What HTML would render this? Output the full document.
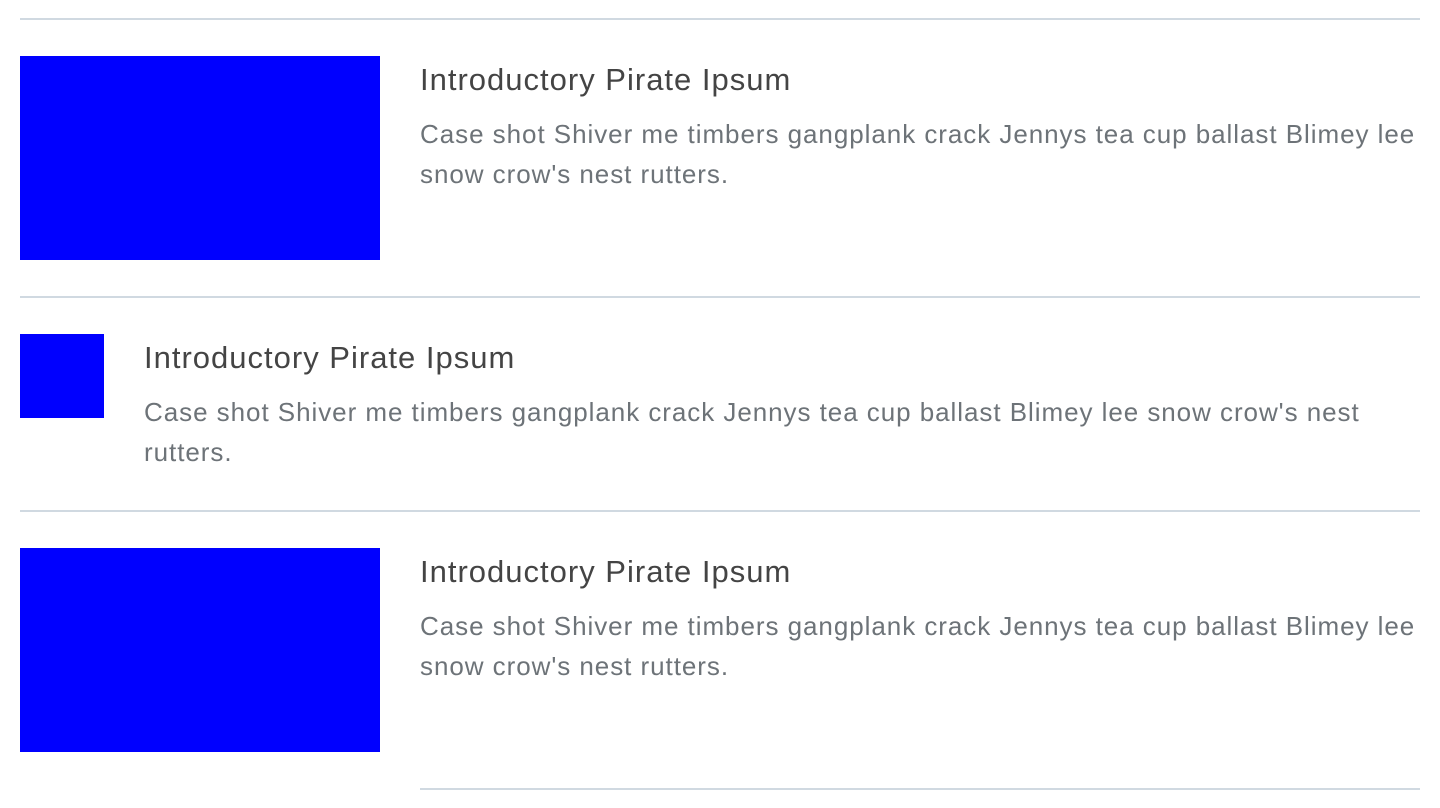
<!DOCTYPE html>
<html><head><style>
body{margin:0;width:1440px;height:808px;background:#fff;position:relative;overflow:hidden;font-family:"Liberation Sans",sans-serif}
.l{position:absolute;height:2px;background:#d0d9e1}
.b{position:absolute;background:#0000ff}
.t{position:absolute;font-size:31px;line-height:40px;color:#444;white-space:nowrap;letter-spacing:1px}
.p{position:absolute;font-size:26px;line-height:40px;color:#6d7378;white-space:nowrap;letter-spacing:0.95px}
</style></head><body>
<div class="l" style="left:20px;top:18px;width:1400px"></div>
<div class="b" style="left:20px;top:56px;width:360px;height:204px"></div>
<div class="t" style="left:420px;top:60px">Introductory Pirate Ipsum</div>
<div class="p" style="left:420px;top:114px">Case shot Shiver me timbers gangplank crack Jennys tea cup ballast Blimey lee<br>snow crow's nest rutters.</div>
<div class="l" style="left:20px;top:296px;width:1400px"></div>
<div class="b" style="left:20px;top:334px;width:84px;height:84px"></div>
<div class="t" style="left:144px;top:338px">Introductory Pirate Ipsum</div>
<div class="p" style="left:144px;top:392px">Case shot Shiver me timbers gangplank crack Jennys tea cup ballast Blimey lee snow crow's nest<br>rutters.</div>
<div class="l" style="left:20px;top:510px;width:1400px"></div>
<div class="b" style="left:20px;top:548px;width:360px;height:204px"></div>
<div class="t" style="left:420px;top:552px">Introductory Pirate Ipsum</div>
<div class="p" style="left:420px;top:606px">Case shot Shiver me timbers gangplank crack Jennys tea cup ballast Blimey lee<br>snow crow's nest rutters.</div>
<div class="l" style="left:420px;top:788px;width:1000px"></div>
</body></html>
